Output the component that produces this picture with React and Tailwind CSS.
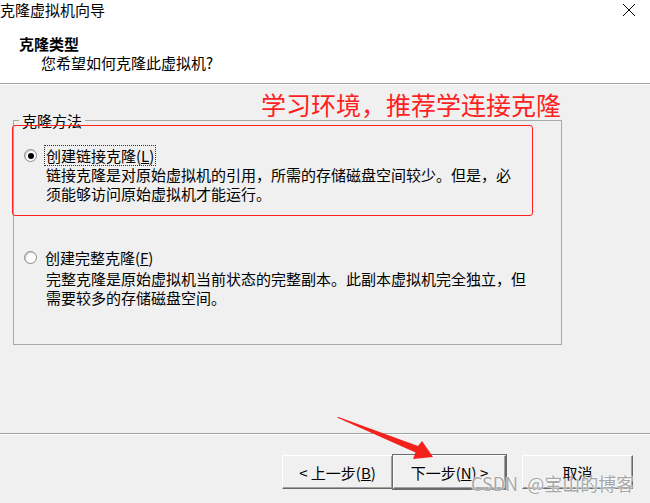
import React from 'react'

const font = { fontFamily: '"Noto Sans CJK SC", "Noto Sans", sans-serif' }

function Radio({ checked }) {
  return (
    <span className="w-[13px] h-[13px] rounded-full border border-[#8a8a8a] bg-white flex items-center justify-center shrink-0 shadow-[inset_1px_1px_1px_#c8c8c8]">
      {checked && <span className="w-[6px] h-[6px] rounded-full bg-black" />}
    </span>
  )
}

function WinButton({ children, primary }) {
  return (
    <button
      className={
        'h-[34px] flex items-center justify-center text-[15px] leading-[19px] text-black bg-[#f0f0f0] border border-white border-r-[#696969] border-b-[#696969] ' +
        (primary
          ? 'w-[113px] shadow-[0_0_0_1px_#6a6a6a,inset_-1px_-1px_0_#a0a0a0]'
          : 'w-[111px] shadow-[inset_-1px_-1px_0_#a0a0a0]')
      }
    >
      {children}
    </button>
  )
}

export default function App() {
  return (
    <div className="w-[650px] h-[503px] bg-[#f0f0f0] relative overflow-hidden text-black" style={font}>
      {/* header */}
      <div className="bg-white h-[84px] border-b border-[#a0a0a0]">
        <div className="h-[20px] flex items-center justify-between">
          <span className="text-[15px] leading-[20px]">克隆虚拟机向导</span>
          <svg width="14" height="14" viewBox="0 0 14 14" className="mr-[14px] mt-[-1px]">
            <path d="M1 1 L13 13 M13 1 L1 13" stroke="#000" strokeWidth="1" />
          </svg>
        </div>
        <div className="mt-[14px] pl-[19px] text-[15px] leading-[19px] font-bold">克隆类型</div>
        <div className="pl-[41px] text-[15px] leading-[19px]">您希望如何克隆此虚拟机?</div>
      </div>
      <div className="h-px bg-white" />

      {/* group box */}
      <div className="pl-[13px] pt-[26px]">
        <fieldset className="w-[549px] h-[234px] border border-[#a8a8a8]">
          <legend className="ml-[5px] px-[3px] text-[15px] leading-[19px]">克隆方法</legend>
          <div className="pt-[15px]">
            <div className="flex items-center pl-[10px] gap-[7px]">
              <Radio checked />
              <span className="border border-dotted border-[#333] px-px text-[15px] leading-[19px]">
                创建链接克隆(<span className="underline">L</span>)
              </span>
            </div>
            <div className="pl-[32px] -mt-px text-[15px] leading-[19px] whitespace-nowrap">
              链接克隆是对原始虚拟机的引用，所需的存储磁盘空间较少。但是，必<br />
              须能够访问原始虚拟机才能运行。
            </div>

            <div className="flex items-center pl-[10px] gap-[8px] mt-[45px]">
              <Radio />
              <span className="text-[15px] leading-[19px]">
                创建完整克隆(<span className="underline">F</span>)
              </span>
            </div>
            <div className="pl-[32px] mt-[2px] text-[15px] leading-[19px] whitespace-nowrap">
              完整克隆是原始虚拟机当前状态的完整副本。此副本虚拟机完全独立，但<br />
              需要较多的存储磁盘空间。
            </div>
          </div>
        </fieldset>
      </div>

      {/* bottom */}
      <div className="mt-[88px] border-t border-[#a0a0a0]">
        <div className="h-px bg-white" />
        <div className="flex justify-end pr-[17px] pt-[20px]">
          <WinButton>&lt; 上一步(<span className="underline">B</span>)</WinButton>
          <WinButton primary>下一步(<span className="underline">N</span>) &gt;</WinButton>
          <div className="w-[16px]" />
          <WinButton>取消</WinButton>
        </div>
      </div>

      {/* annotations */}
      <div className="absolute left-[261px] top-[89px] text-[25px] leading-[31px] text-[#ff1f1f] whitespace-nowrap">
        学习环境，推荐学连接克隆
      </div>
      <div className="absolute left-[12px] top-[125px] w-[521px] h-[91px] border border-[#ff2020] rounded-[3px]" />
      <svg className="absolute left-0 top-0" width="650" height="503" viewBox="0 0 650 503">
        <polygon
          points="337,417.5 338.5,417 418,446 422,441 433,457 413,459 415.5,452.5"
          fill="#f3211c"
        />
      </svg>
      <div className="absolute left-[471px] top-[471px] text-[18px] leading-[24px] text-[#a8a8a8] whitespace-nowrap [text-shadow:0_0_2px_#fff,0_0_2px_#fff]">
        <span>CSDN</span>
        <span className="ml-[9px]">@宝山的博客</span>
      </div>
    </div>
  )
}
